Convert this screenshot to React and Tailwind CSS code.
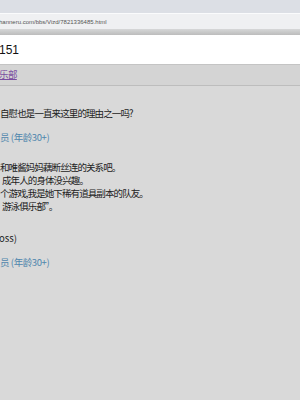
export default function App() {
  const font = { fontFamily: '"Noto Sans CJK SC", "Noto Sans", sans-serif' };
  return (
    <div className="w-[300px] h-[400px] overflow-hidden bg-[#d9d9d9]" style={font}>
      <div className="h-[13px] bg-[#dcdfe5]" />
      <div className="h-[16px] bg-[#eff0f2] border-t border-[#fafbfc] flex items-center overflow-hidden">
        <span className="text-[6px] leading-none text-[#555] whitespace-nowrap -ml-[1px] font-['Liberation_Sans']">hanneru.com/bbs/Vizd/7821336485.html</span>
      </div>
      <div className="h-[6px] bg-gradient-to-b from-[#d6d7d8] to-[#bcbcbc]" />
      <div className="h-[30px] bg-white flex items-center overflow-hidden border-b border-[#c4c4c4]">
        <span className="text-[12px] leading-none text-[#111] -ml-[1px] font-['Liberation_Sans']">151</span>
      </div>
      <div className="h-[21px] bg-[#d4d4d4] border-b border-[#bdbdbd] flex items-center overflow-hidden">
        <span className="text-[9.5px] leading-none text-[#7a4ea0] underline -ml-[1px] tracking-[-0.6px] whitespace-nowrap">乐部</span>
      </div>
      <div className="text-[9.5px] leading-[13px] tracking-[-0.9px] text-[#222] whitespace-nowrap overflow-hidden">
        <div className="pt-[21px]">自慰也是一直来这里的理由之一吗?</div>
        <div className="mt-[11px] text-[#4f86ad] tracking-[-0.4px]">员 (年龄30+)</div>
        <div className="mt-[17px]">和唯酱妈妈藕断丝连的关系吧。</div>
        <div className="pl-[2px]">成年人的身体没兴趣。</div>
        <div>个游戏,我是她下稀有道具副本的队友。</div>
        <div className="pl-[2px]">游泳俱乐部”。</div>
        <div className="mt-[19px] -ml-[1px] tracking-normal">oss)</div>
        <div className="mt-[11px] text-[#4f86ad] tracking-[-0.4px]">员 (年龄30+)</div>
      </div>
    </div>
  );
}
